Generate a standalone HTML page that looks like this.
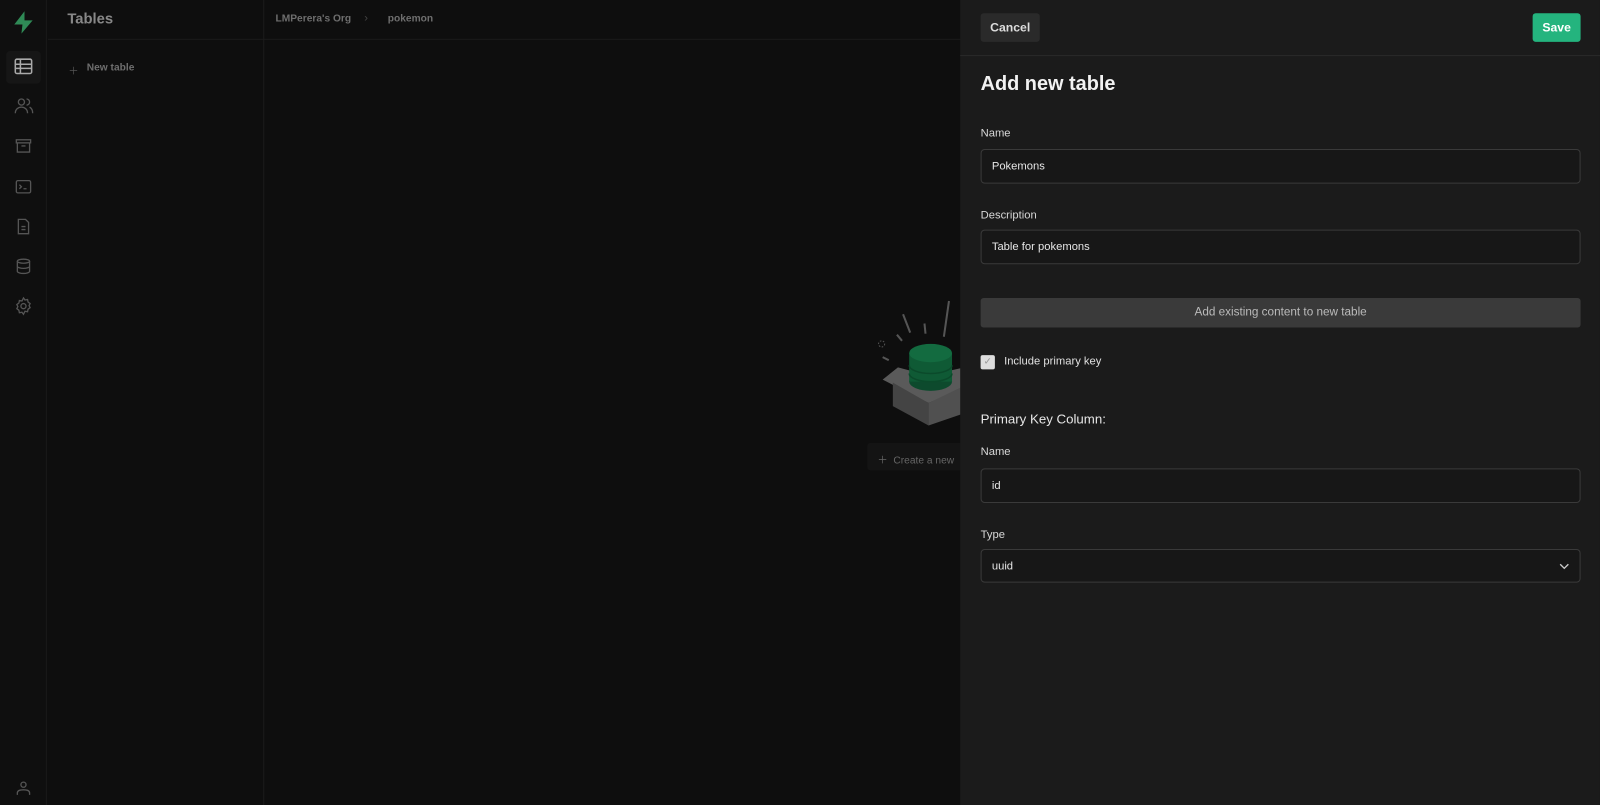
<!DOCTYPE html>
<html><head><meta charset="utf-8"><style>
*{box-sizing:border-box;margin:0;padding:0}
body{width:1600px;height:805px;overflow:hidden;background:#0e0e0e;font-family:"Liberation Sans",sans-serif;color:#ddd;position:relative}
#w{position:absolute;left:0;top:0;width:1568px;height:789px;transform:scale(1.0204);transform-origin:0 0}
.side{position:absolute;left:0;top:0;width:46px;height:789px;background:#0f0f0f;border-right:1px solid #1a1a1a}
.ic{position:absolute;left:13px;width:20px;height:20px}
.tables{position:absolute;left:47px;top:0;width:212px;height:789px;background:#0e0e0e;border-right:1px solid #1c1c1c}
.hdr{position:absolute;left:47px;top:0;width:1521px;height:39px;border-bottom:1px solid #1c1c1c}
.panel{position:absolute;left:941px;top:0;width:627px;height:789px;background:#1b1b1b}
.lbl{position:absolute;left:20px;font-size:11px;color:#d8d8d8}
.inp{position:absolute;left:20px;width:588px;height:34px;background:#171717;border:1px solid #3a3a3a;border-radius:4px;font-size:11px;color:#e6e6e6;padding:10px;line-height:13px}
</style></head><body><div id="w">
<div class="side">
<svg style="position:absolute;left:12px;top:10px" width="22" height="24" viewBox="0 0 22 24"><path d="M12 1 L2 14 H10 L9 23 L20 10 H12 Z" fill="#2f8a56"/></svg>
<div style="position:absolute;left:6px;top:50px;width:34px;height:32px;background:#161616;border-radius:4px"></div>
<svg class="ic" style="top:55px" viewBox="0 0 20 20" fill="none" stroke="#aaa" stroke-width="1.5"><rect x="2" y="3" width="16" height="14" rx="1.5"/><path d="M2 8h16M2 12h16M7 3v14"/></svg>
<svg class="ic" style="top:94px" viewBox="0 0 20 20" fill="none" stroke="#555" stroke-width="1.3"><circle cx="8" cy="6" r="3"/><path d="M2 17c0-4 3-6 6-6s6 2 6 6M13 3a3 3 0 0 1 0 6M16 11c2 1 3 3 3 6"/></svg>
<svg class="ic" style="top:133px" viewBox="0 0 20 20" fill="none" stroke="#555" stroke-width="1.3"><rect x="3" y="4" width="14" height="3"/><path d="M4 7v9h12V7M8 10h4"/></svg>
<svg class="ic" style="top:173px" viewBox="0 0 20 20" fill="none" stroke="#555" stroke-width="1.3"><rect x="3" y="4" width="14" height="12" rx="1.5"/><path d="M6 8l2 2-2 2M10 12h3"/></svg>
<svg class="ic" style="top:212px" viewBox="0 0 20 20" fill="none" stroke="#555" stroke-width="1.3"><path d="M5 3h7l3 3v11H5z M8 10h4M8 13h4"/></svg>
<svg class="ic" style="top:251px" viewBox="0 0 20 20" fill="none" stroke="#555" stroke-width="1.3"><ellipse cx="10" cy="5" rx="6" ry="2"/><path d="M4 5v10c0 1 3 2 6 2s6-1 6-2V5M4 10c0 1 3 2 6 2s6-1 6-2"/></svg>
<svg class="ic" style="top:290px" viewBox="0 0 20 20" fill="none" stroke="#555" stroke-width="1.3"><circle cx="10" cy="10" r="2.5"/><path d="M10 2l1.5 2 2.5-.5.5 2.5 2 1.5-1 2 1 2-2 1.5-.5 2.5-2.5-.5L10 18l-1.5-2-2.5.5-.5-2.5-2-1.5 1-2-1-2 2-1.5.5-2.5 2.5.5z"/></svg>
<svg class="ic" style="top:762px" viewBox="0 0 20 20" fill="none" stroke="#555" stroke-width="1.3"><circle cx="10" cy="7" r="2.5"/><path d="M4 17v-2c0-2 2-3 6-3s6 1 6 3v2"/></svg>
</div>
<div class="tables">
<div style="position:absolute;left:19px;top:11px;font-size:14.5px;font-weight:bold;color:#888">Tables</div>
<div style="position:absolute;left:20px;top:61px;font-size:10px;color:#555">＋</div>
<div style="position:absolute;left:38px;top:61px;font-size:10px;font-weight:bold;color:#6e6e6e">New table</div>
</div>
<div class="hdr">
<div style="position:absolute;left:223px;top:13px;font-size:10px;font-weight:bold;color:#6e6e6e">LMPerera's Org</div>
<div style="position:absolute;left:310px;top:12px;font-size:11px;color:#444">›</div>
<div style="position:absolute;left:333px;top:13px;font-size:10px;font-weight:bold;color:#6e6e6e">pokemon</div>
</div>
<svg style="position:absolute;left:855px;top:290px" width="90" height="130" viewBox="0 0 90 130">
<g stroke="#555" stroke-width="2"><path d="M75 5L70 40M30 18L37 36M51 27L52 37M24 38L29 44M10 60L16 63"/></g>
<circle cx="9" cy="47" r="3" fill="none" stroke="#555" stroke-dasharray="1.5 1.5"/>
<path d="M10 82L25 70L55 78L90 70L90 90L55 105Z" fill="#5a5a5a"/>
<path d="M20 85L55 105V127L20 108Z" fill="#444"/><path d="M55 105L90 88V115L55 127Z" fill="#505050"/>
<ellipse cx="57" cy="84" rx="21" ry="9" fill="#0d4a2d"/><rect x="36" y="56" width="42" height="28" fill="#0f5a35"/>
<path d="M36 68a21 8 0 0 0 42 0M36 76a21 8 0 0 0 42 0" fill="none" stroke="#0b4a2b" stroke-width="1.5"/>
<ellipse cx="57" cy="56" rx="21" ry="9" fill="#136b40"/>
</svg>
<div style="position:absolute;left:850px;top:434px;width:100px;height:27px;background:#141414;border-radius:3px;font-size:10px;color:#666;padding:8px 10px;white-space:nowrap">＋&nbsp; Create a new</div>
<div class="panel">
<div style="position:absolute;left:0;top:54px;width:627px;border-top:1px solid #2a2a2a"></div>
<div style="position:absolute;left:20px;top:13px;width:58px;height:28px;background:#2a2a2a;border-radius:3px;font-size:12px;font-weight:bold;color:#ddd;text-align:center;line-height:28px">Cancel</div>
<div style="position:absolute;left:561px;top:13px;width:47px;height:28px;background:#24b47e;border-radius:3px;font-size:12px;font-weight:bold;color:#fff;text-align:center;line-height:28px">Save</div>
<div style="position:absolute;left:20px;top:71px;font-size:19.5px;font-weight:bold;color:#f2f2f2">Add new table</div>
<div class="lbl" style="top:125px">Name</div>
<div class="inp" style="top:146px">Pokemons</div>
<div class="lbl" style="top:205px">Description</div>
<div class="inp" style="top:225px">Table for pokemons</div>
<div style="position:absolute;left:20px;top:292px;width:588px;height:29px;background:#3a3a3a;border-radius:3px;font-size:11.5px;color:#bbb;text-align:center;line-height:29px">Add existing content to new table</div>
<div style="position:absolute;left:20px;top:348px;width:14px;height:14px;background:#ddd;border-radius:2px;color:#999;font-size:10px;text-align:center;line-height:14px">✓</div>
<div style="position:absolute;left:43px;top:348px;font-size:11px;color:#e0e0e0">Include primary key</div>
<div style="position:absolute;left:20px;top:403px;font-size:13px;color:#e6e6e6">Primary Key Column:</div>
<div class="lbl" style="top:437px">Name</div>
<div class="inp" style="top:459px">id</div>
<div class="lbl" style="top:518px">Type</div>
<div class="inp" style="top:538px;height:33px">uuid
<svg style="position:absolute;right:10px;top:12px" width="10" height="8" viewBox="0 0 10 8"><path d="M1 2l4 4 4-4" fill="none" stroke="#ccc" stroke-width="1.3"/></svg></div>
</div>
</div></body></html>
